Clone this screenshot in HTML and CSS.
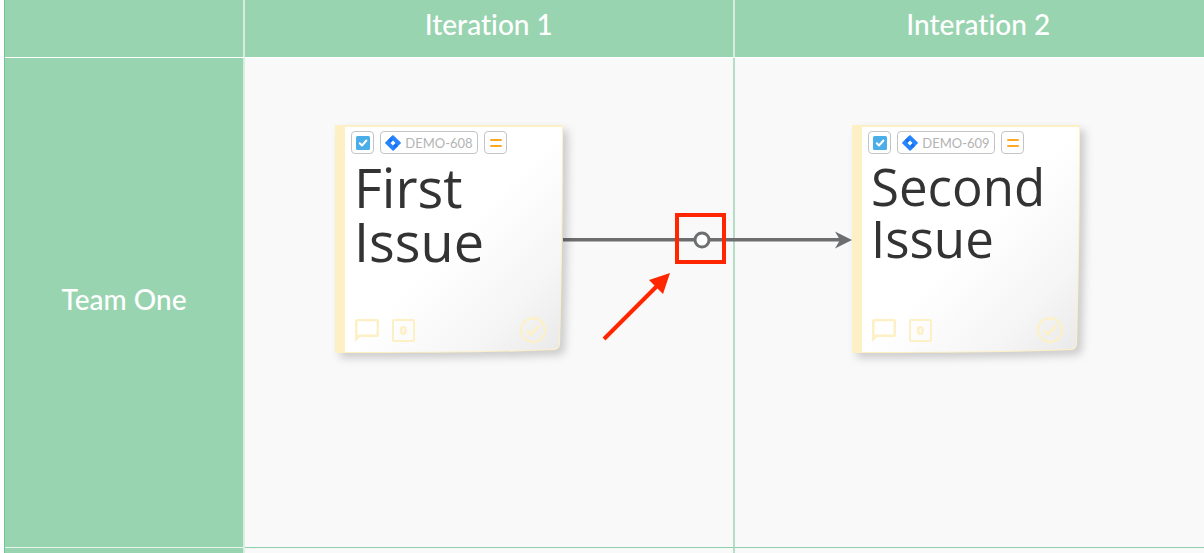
FILE: index.html
```
<!DOCTYPE html>
<html lang="en">
<head>
<meta charset="utf-8">
<title>Program board</title>
<link rel="stylesheet" href="styles.css">
</head>
<body>
<svg class="defs" width="0" height="0" aria-hidden="true">
  <defs>
    <linearGradient id="paper" x1="0" y1="0" x2="1" y2="1">
      <stop offset="0.5" stop-color="#ffffff"/>
      <stop offset="0.8" stop-color="#f5f5f5"/>
      <stop offset="1" stop-color="#e9e9e9"/>
    </linearGradient>
    <linearGradient id="jira-fade" x1="0" y1="0" x2="0" y2="1">
      <stop offset="0" stop-color="#2684ff"/>
      <stop offset="0.5" stop-color="#1268e8"/>
      <stop offset="1" stop-color="#2684ff"/>
    </linearGradient>
    <symbol id="note-paper" viewBox="0 0 228 228">
      <path d="M0 0H228C228 80 227 150 225 220Q224 224 220 225C150 228 80 228 0 228Z" fill="#fdf0c4"/>
      <path d="M10 2H227C227 80 226 150 224 220Q223 223 219 224C150 227 80 227 10 227Z" fill="url(#paper)"/>
    </symbol>
    <symbol id="task" viewBox="0 0 14 14">
      <rect width="14" height="14" rx="1.5" fill="#4baee8"/>
      <path d="M3.8 7.3L6 9.5L10.4 4.5" fill="none" stroke="#fff" stroke-width="2" stroke-linecap="round" stroke-linejoin="round"/>
    </symbol>
    <symbol id="jira" viewBox="0 0 16 16">
      <path d="M8 0L15.6 7.3Q16 8 15.6 8.5L8 16L.4 8.5Q0 8 .4 7.3Z" fill="#2684ff"/>
      <path d="M8 0Q5.6 2.5 8 5.3L5.6 7.8L2.9 5ZM8 16Q10.400 13.500 8 10.700L10.400 8.200L13.100 11Z" fill="url(#jira-fade)"/>
      <path d="M8 5.400L10.500 7.900L8 10.400L5.500 7.900Z" fill="#fff"/>
    </symbol>
    <symbol id="priority" viewBox="0 0 12 10">
      <path d="M1 2H11M1 8H11" stroke="#ffa726" stroke-width="2" stroke-linecap="round"/>
    </symbol>
    <symbol id="comment" viewBox="0 0 24 24">
      <path d="M2 1H22Q24 1 24 3V17Q24 19 22 19H5L0 24V3Q0 1 2 1ZM2.500 3.300V17.500L4 16.600H21.600V3.300Z" fill="#fdf0c4" fill-rule="evenodd"/>
    </symbol>
    <symbol id="done" viewBox="0 0 26 26">
      <circle cx="13" cy="13" r="11.900" fill="none" stroke="#fdf0c4" stroke-width="2.200"/>
      <path d="M6.800 13.200L11 17.500L19.500 8.500" fill="none" stroke="#fdf0c4" stroke-width="2.600"/>
    </symbol>
  </defs>
</svg>
<main class="board">
  <table class="grid">
    <thead>
      <tr><td class="corner"></td><th class="iteration" scope="col">Iteration 1</th><th class="iteration" scope="col">Interation 2</th></tr>
    </thead>
    <tbody>
      <tr><th class="team" scope="row">Team One</th><td class="cell"></td><td class="cell"></td></tr>
      <tr class="next"><th class="team" scope="row"></th><td class="cell"></td><td class="cell"></td></tr>
    </tbody>
  </table>
  <svg class="links" width="300" height="150" viewBox="0 0 300 150" aria-hidden="true">
    <path d="M3 39.700H282" stroke="#6d6e70" stroke-width="3.500"/>
    <path d="M292 40L275 31.500L280 40L275 48.500Z" fill="#6d6e70"/>
    <circle cx="142" cy="40" r="7" fill="#fff" stroke="#6d6e70" stroke-width="3"/>
    <rect x="117" y="15" width="47" height="47" fill="none" stroke="#ff2600" stroke-width="4"/>
    <path d="M44 139L100 83" stroke="#ff2600" stroke-width="4"/>
    <path d="M110 73L89 80L103 94Z" fill="#ff2600"/>
  </svg>
  <article class="note note-first">
    <svg class="paper" aria-hidden="true"><use href="#note-paper"/></svg>
    <div class="chips">
      <span class="chip"><svg width="14" height="14"><use href="#task"/></svg></span>
      <span class="chip chip-key"><svg width="16" height="16"><use href="#jira"/></svg><span class="key">DEMO-608</span></span>
      <span class="chip"><svg width="12" height="10"><use href="#priority"/></svg></span>
    </div>
    <h2 class="title title-large">First<br>Issue</h2>
    <div class="tools">
      <button class="tool" aria-label="Comments"><svg width="24" height="24"><use href="#comment"/></svg></button>
      <button class="tool points">0</button>
      <button class="tool tool-done" aria-label="Mark done"><svg width="26" height="26"><use href="#done"/></svg></button>
    </div>
  </article>
  <article class="note note-second">
    <svg class="paper" aria-hidden="true"><use href="#note-paper"/></svg>
    <div class="chips">
      <span class="chip"><svg width="14" height="14"><use href="#task"/></svg></span>
      <span class="chip chip-key"><svg width="16" height="16"><use href="#jira"/></svg><span class="key">DEMO-609</span></span>
      <span class="chip"><svg width="12" height="10"><use href="#priority"/></svg></span>
    </div>
    <h2 class="title">Second<br>Issue</h2>
    <div class="tools">
      <button class="tool" aria-label="Comments"><svg width="24" height="24"><use href="#comment"/></svg></button>
      <button class="tool points">0</button>
      <button class="tool tool-done" aria-label="Mark done"><svg width="26" height="26"><use href="#done"/></svg></button>
    </div>
  </article>
</main>
</body>
</html>
```
FILE: styles.css
```
* {
  box-sizing: border-box;
}

body {
  margin: 0;
  background: #fff;
  font-family: Lato, "Liberation Sans", sans-serif;
  font-variant-ligatures: none;
  overflow: hidden;
}

.defs {
  position: absolute;
}

.board {
  position: relative;
  padding-left: 4px;
  height: 100vh;
  overflow: hidden;
}

.grid {
  table-layout: fixed;
  width: 1220px;
  border-collapse: separate;
  border-spacing: 0;
  border-left: 1px solid #6fc795;
}

.grid th,
.corner {
  background: #98d4b0;
  color: #fff;
  font-size: 28px;
  font-weight: 500;
  line-height: 34px;
}

.corner {
  width: 240px;
  border-right: 2px solid #d5ecde;
  border-bottom: 1px solid #fff;
}

.grid .iteration {
  padding: 7px 0 16px;
  border-right: 2px solid #d5ecde;
  border-bottom: 1px solid #fff;
}

.grid .team {
  height: 490px;
  padding: 0 0 8px;
  border-right: 2px solid #d9eee1;
  border-bottom: 1px solid #e4f6eb;
}

.cell {
  background: #f9f9f9;
  border-right: 2px solid #b4dfc6;
  border-bottom: 1px solid #8fcfaa;
}

.next .team {
  height: 60px;
}

.links {
  position: absolute;
  left: 560px;
  top: 200px;
}

.note {
  position: absolute;
  z-index: 1;
  top: 125px;
  width: 228px;
  height: 228px;
  padding: 6px 17px 10px 16px;
  display: flex;
  flex-direction: column;
}

.note-first {
  left: 335px;
}

.note-second {
  left: 852px;
}

.paper {
  position: absolute;
  inset: 0;
  width: 100%;
  height: 100%;
  z-index: -1;
  overflow: visible;
  filter: drop-shadow(5px 5px 4px rgba(0, 0, 0, 0.18));
}

.chips {
  display: flex;
  gap: 6px;
}

.chip {
  display: flex;
  align-items: center;
  justify-content: center;
  width: 23px;
  height: 23px;
  border: 1px solid #c4c4c4;
  border-radius: 4px;
  background: #fff;
}

.chip-key {
  width: 98px;
  gap: 4px;
}

.key {
  color: #b3b3b3;
  font-size: 13px;
  line-height: 18px;
}

.title {
  margin: 6px 0 0 3px;
  color: #333;
  font-family: "Open Sans", "Noto Sans", sans-serif;
  font-size: 51px;
  font-weight: 400;
  line-height: 52px;
}

.title-large {
  font-size: 54px;
  line-height: 54px;
}

.tools {
  display: flex;
  align-items: center;
  gap: 13px;
  margin-top: auto;
  padding-left: 4px;
}

.tool {
  display: flex;
  padding: 0;
  border: 0;
  background: none;
}

.points {
  width: 23px;
  height: 23px;
  align-items: center;
  justify-content: center;
  border: 2px solid #fdf0c4;
  border-radius: 2px;
  color: #fdf0c4;
  font-family: "Open Sans", sans-serif;
  font-size: 13px;
  font-weight: 800;
  line-height: 16px;
}

.tool-done {
  margin-left: auto;
}
```
